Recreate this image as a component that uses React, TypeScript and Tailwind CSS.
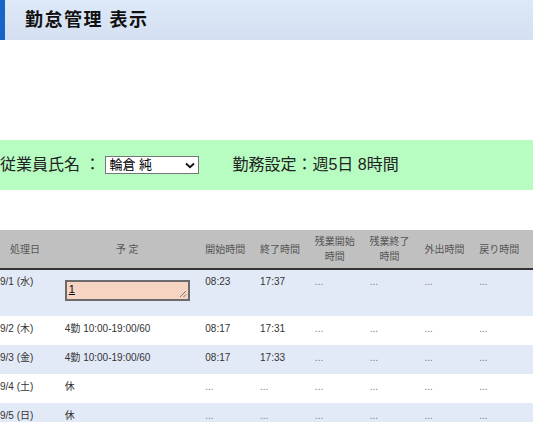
import React from "react";

const jp = { fontFamily: '"Liberation Sans", "Noto Sans CJK JP", sans-serif' };

type Row = {
  date: string;
  plan: string | null;
  start: string;
  end: string;
  bg: string;
};

const rows: Row[] = [
  { date: "9/2 (木)", plan: "4勤 10:00-19:00/60", start: "08:17", end: "17:31", bg: "bg-white" },
  { date: "9/3 (金)", plan: "4勤 10:00-19:00/60", start: "08:17", end: "17:33", bg: "bg-[#e3eaf7]" },
  { date: "9/4 (土)", plan: "休", start: "...", end: "...", bg: "bg-white" },
  { date: "9/5 (日)", plan: "休", start: "...", end: "...", bg: "bg-[#e3eaf7]" },
];

function Cell({ children, dots }: { children: React.ReactNode; dots?: boolean }) {
  return (
    <div className={`w-[55px] pl-[1px] ${dots ? "text-[#777]" : "text-[#333]"}`}>{children}</div>
  );
}

export default function App() {
  return (
    <div className="w-[533px] h-[422px] overflow-hidden bg-white" style={jp}>
      <div className="h-[40px] flex items-center border-l-[5px] border-[#1565c8] bg-gradient-to-b from-[#dde9f8] to-[#d4e0f1] pl-[20px]">
        <h1 className="text-[18px] font-bold text-[#111] tracking-[1.5px]">勤怠管理 表示</h1>
      </div>

      <div className="mt-[100px] h-[50px] bg-[#b7fcc1] flex items-center text-[16px] text-[#222]">
        <span>従業員氏名 ：</span>
        <div className="ml-[5px] w-[94px] h-[18px] border border-[#767676] bg-white flex items-center justify-between pl-[3px] pr-[3px] text-[13px] text-black">
          <span>輪倉 純</span>
          <svg width="10" height="7" viewBox="0 0 10 7">
            <path d="M1 1.5 L5 5.2 L9 1.5" stroke="#111" strokeWidth="1.8" fill="none" />
          </svg>
        </div>
        <span className="ml-[33px]">勤務設定：週5日 8時間</span>
      </div>

      <div className="mt-[40px] text-[10px]">
        <div className="h-[38px] bg-[#c0c0c0] flex items-center text-[#555] border-b-2 border-[#333] box-content">
          <div className="w-[50px] text-center">処理日</div>
          <div className="w-[155px] text-center">予 定</div>
          <Cell><span className="text-[#555]">開始時間</span></Cell>
          <Cell><span className="text-[#555]">終了時間</span></Cell>
          <div className="w-[55px] pl-[1px]"><div className="inline-block text-center leading-[15px]">残業開始<br />時間</div></div>
          <div className="w-[55px] pl-[1px]"><div className="inline-block text-center leading-[15px]">残業終了<br />時間</div></div>
          <div className="w-[55px] pl-[1px]">外出時間</div>
          <div className="w-[55px] pl-[1px]">戻り時間</div>
        </div>

        <div className="h-[46px] bg-[#e3eaf7] flex items-start pt-[4px]">
          <div className="w-[50px] text-[#333]">9/1 (水)</div>
          <div className="w-[155px] pl-[15px] pt-[6px]">
            <div className="relative w-[125px] h-[21px] border-2 border-[#6b6b6b] bg-[#f7d3c1] text-[11px] leading-[14px] pl-[2px]">
              <span className="underline">1</span>
              <svg className="absolute right-[1px] bottom-[1px]" width="8" height="8" viewBox="0 0 8 8">
                <path d="M7 1 L1 7 M7 4.5 L4.5 7" stroke="#777" strokeWidth="1" />
              </svg>
            </div>
          </div>
          <Cell>08:23</Cell>
          <Cell>17:37</Cell>
          <Cell dots>...</Cell>
          <Cell dots>...</Cell>
          <Cell dots>...</Cell>
          <Cell dots>...</Cell>
        </div>

        {rows.map((r) => (
          <div key={r.date} className={`h-[29px] ${r.bg} flex items-start pt-[5px]`}>
            <div className="w-[50px] text-[#333]">{r.date}</div>
            <div className="w-[155px] pl-[15px] text-[#333]">{r.plan}</div>
            <Cell dots={r.start === "..."}>{r.start}</Cell>
            <Cell dots={r.end === "..."}>{r.end}</Cell>
            <Cell dots>...</Cell>
            <Cell dots>...</Cell>
            <Cell dots>...</Cell>
            <Cell dots>...</Cell>
          </div>
        ))}
      </div>
    </div>
  );
}
